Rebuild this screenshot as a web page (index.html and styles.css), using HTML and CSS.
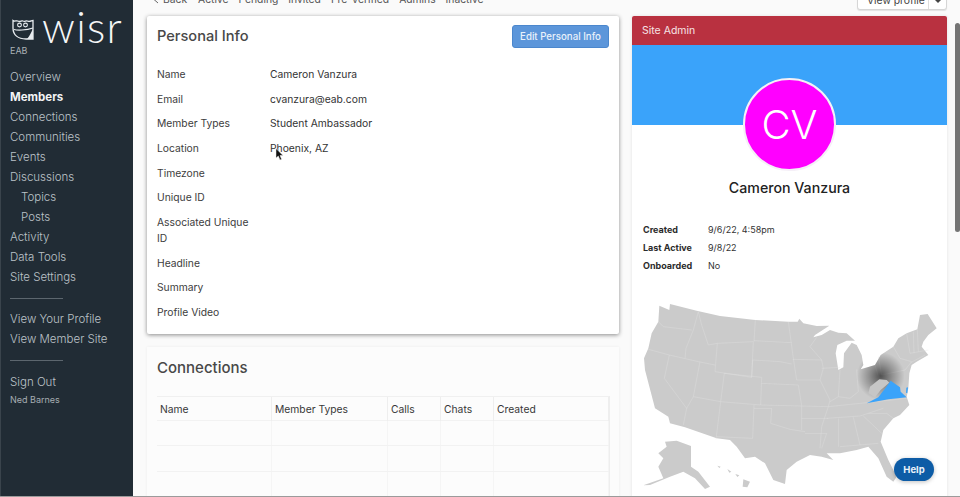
FILE: index.html
```html
<!DOCTYPE html>
<html lang="en">
<head>
<meta charset="utf-8">
<title>Member - Cameron Vanzura</title>
<link rel="stylesheet" href="styles.css">
</head>
<body>
<div class="app">
  <aside class="sidebar">
    <div class="brand">
      <svg class="owl" viewBox="0 0 22 21" width="22" height="21" aria-hidden="true">
        <path d="M1 1.5 C3 3 4.5 1 6.5 2.2 C8.5 3.4 9.5 1 11 2 C13 3.2 14 1 16 2.2 C18 3.2 19.5 1.5 21 1.5 L21 20 L14 20 C6 20 1 16 1 9 Z" fill="none" stroke="#e8ecef" stroke-width="1.3"/>
        <circle cx="7.5" cy="6" r="1.9" fill="none" stroke="#e8ecef" stroke-width="1.1"/>
        <circle cx="13.5" cy="6" r="1.9" fill="none" stroke="#e8ecef" stroke-width="1.1"/>
        <path d="M2 10.5 C5 11.5 14 11.5 21 9" fill="none" stroke="#e8ecef" stroke-width="1.1"/>
        <path d="M21 10 L21 20 L15 20 C18 17 19 13 21 10 Z" fill="#e8ecef"/>
      </svg>
      <span class="wordmark">wisr</span>
    </div>
    <div class="org">EAB</div>
    <nav class="nav">
      <a>Overview</a>
      <a class="active">Members</a>
      <a>Connections</a>
      <a>Communities</a>
      <a>Events</a>
      <a>Discussions</a>
      <a class="sub">Topics</a>
      <a class="sub">Posts</a>
      <a>Activity</a>
      <a>Data Tools</a>
      <a>Site Settings</a>
      <hr class="rule rule-one">
      <a>View Your Profile</a>
      <a>View Member Site</a>
      <hr class="rule rule-two">
      <a>Sign Out</a>
      <span class="user">Ned Barnes</span>
    </nav>
  </aside>

  <main class="main">
    <div class="topbar">
      <div class="tabs">
        <span class="tab back"><svg class="chev" viewBox="0 0 6 9" width="6" height="9" aria-hidden="true"><path d="M5 1 L1 4.5 L5 8" fill="none" stroke="#666" stroke-width="1"/></svg>Back</span>
        <span class="tab">Active</span>
        <span class="tab">Pending</span>
        <span class="tab">Invited</span>
        <span class="tab">Pre-Verified</span>
        <span class="tab">Admins</span>
        <span class="tab">Inactive</span>
      </div>
      <div class="split">
        <span class="split-main">View profile</span>
        <span class="split-caret"></span>
      </div>
    </div>

    <div class="columns">
      <div class="left">
        <section class="card info">
          <div class="card-head">
            <h2>Personal Info</h2>
            <button class="edit">Edit Personal Info</button>
          </div>
          <dl class="fields">
            <dt>Name</dt><dd>Cameron Vanzura</dd>
            <dt>Email</dt><dd>cvanzura@eab.com</dd>
            <dt>Member Types</dt><dd>Student Ambassador</dd>
            <dt>Location</dt><dd>Phoenix, AZ</dd>
            <dt>Timezone</dt><dd></dd>
            <dt>Unique ID</dt><dd></dd>
            <dt>Associated Unique ID</dt><dd></dd>
            <dt>Headline</dt><dd></dd>
            <dt>Summary</dt><dd></dd>
            <dt>Profile Video</dt><dd></dd>
          </dl>
        </section>

        <section class="connections">
          <h2>Connections</h2>
          <div class="table">
            <div class="row head"><span>Name</span><span>Member Types</span><span>Calls</span><span>Chats</span><span>Created</span></div>
            <div class="row"><span></span><span></span><span></span><span></span><span></span></div>
            <div class="row"><span></span><span></span><span></span><span></span><span></span></div>
            <div class="row"><span></span><span></span><span></span><span></span><span></span></div>
          </div>
        </section>
      </div>

      <section class="profile">
        <div class="role">Site Admin</div>
        <div class="banner"><div class="avatar">CV</div></div>
        <h3 class="person">Cameron Vanzura</h3>
        <dl class="stats">
          <dt>Created</dt><dd>9/6/22, 4:58pm</dd>
          <dt>Last Active</dt><dd>9/8/22</dd>
          <dt>Onboarded</dt><dd>No</dd>
        </dl>
        <svg class="map" viewBox="6 0 945 621" width="315" height="207" aria-hidden="true">
          <defs>
            <radialGradient id="glow">
              <stop offset="0" stop-color="#000" stop-opacity=".6"/>
              <stop offset=".5" stop-color="#000" stop-opacity=".28"/>
              <stop offset="1" stop-color="#000" stop-opacity="0"/>
            </radialGradient>
            <clipPath id="us"><path d="M88 47L118 60L120 42L200 62L270 78L376 90L475 95L503 95L508 86L520 100L560 108L598 107L555 135L550 142L575 135L600 120L625 128L650 130L675 152L650 152L622 165L617 190L625 240L640 232L642 190L665 158L680 165L695 195L700 225L692 238L735 225L752 195L790 170L805 145L830 130L862 118L870 75L893 72L920 115L895 135L880 155L875 170L895 195L860 215L845 225L838 250L835 295L830 320L838 345L810 375L790 385L760 420L752 455L775 510L800 560L790 575L770 560L745 505L715 470L680 480L630 490L590 490L610 510L575 500L540 495L500 515L470 540L465 582L430 570L405 520L375 500L345 505L320 470L300 450L260 445L165 412L120 400L115 380L75 355L45 240L42 205L55 175L65 130L85 95Z"/></clipPath>
          </defs>
          <path class="land" d="M88 47L118 60L120 42L200 62L270 78L376 90L475 95L503 95L508 86L520 100L560 108L598 107L555 135L550 142L575 135L600 120L625 128L650 130L675 152L650 152L622 165L617 190L625 240L640 232L642 190L665 158L680 165L695 195L700 225L692 238L735 225L752 195L790 170L805 145L830 130L862 118L870 75L893 72L920 115L895 135L880 155L875 170L895 195L860 215L845 225L838 250L835 295L830 320L838 345L810 375L790 385L760 420L752 455L775 510L800 560L790 575L770 560L745 505L715 470L680 480L630 490L590 490L610 510L575 500L540 495L500 515L470 540L465 582L430 570L405 520L375 500L345 505L320 470L300 450L260 445L165 412L120 400L115 380L75 355L45 240L42 205L55 175L65 130L85 95Z"/>
          <g class="borders">
            <path d="M85 95L100 110L185 120"/>
            <path d="M205 65L190 120L168 175L165 205"/>
            <path d="M55 178L118 195L205 215L255 225"/>
            <path d="M118 195L103 265L170 355L160 405"/>
            <path d="M210 215L190 320L170 355"/>
            <path d="M205 65L215 105L235 165L262 160"/>
            <path d="M262 160L255 245L365 262L370 155L262 160"/>
            <path d="M376 90L372 155M368 210L365 262"/>
            <path d="M372 152L485 158"/>
            <path d="M368 210L450 215L485 222"/>
            <path d="M475 95L490 205L500 270"/>
            <path d="M488 208L575 210"/>
            <path d="M283 250L272 335L190 320"/>
            <path d="M283 250L395 262L392 345L272 335L258 448"/>
            <path d="M372 345L368 445L260 440"/>
            <path d="M395 280L505 285"/>
            <path d="M392 345L595 350"/>
            <path d="M372 355L425 355L422 400L480 418L525 425"/>
            <path d="M505 285L515 347L515 420"/>
            <path d="M515 385L595 385"/>
            <path d="M500 270L570 270L600 330L595 350L575 410L570 475"/>
            <path d="M570 270L580 235L575 210L540 170L560 142"/>
            <path d="M575 235L630 232"/>
            <path d="M630 240L625 320L600 335"/>
            <path d="M680 238L685 305L660 325L625 320"/>
            <path d="M595 350L710 338L830 325"/>
            <path d="M590 385L690 378L760 355"/>
            <path d="M625 385L625 470M670 382L690 465"/>
            <path d="M630 470L745 460"/>
            <path d="M525 430L590 430L575 475"/>
            <path d="M700 378L755 430"/>
            <path d="M715 370L770 370L790 385"/>
            <path d="M745 200L755 255L825 240"/>
            <path d="M830 130L840 190L895 180M862 118L865 185M850 125L852 190M842 218L885 195"/>
            <path d="M790 170L810 205L845 215L825 240"/>
            <path d="M735 225L745 260"/>
          </g>
          <circle cx="752" cy="258" r="72" fill="url(#glow)" clip-path="url(#us)"/>
          <path class="wv" d="M715 310L720 290L748 268L770 270L778 278L752 300L735 322Z"/>
          <path class="va" d="M710 340L745 322L768 292L782 272L810 292L812 305L830 322L775 328Z"/>
          <path class="va" d="M829 293L834 292L832 310L828 308Z"/>
          <polygon class="land" points="105,455 140,452 183,468 183,530 205,545 240,590 225,597 195,565 160,545 120,560 60,585 40,586 100,565 85,530 100,505 85,490 110,470"/>
          <path class="land" d="M262 527L272 530L268 534ZM292 537L304 545L298 548ZM316 552L328 556L322 561ZM340 568L360 575L352 592L338 590Z"/>
        </svg>
      </section>
    </div>
  </main>
  <div class="scroll-thumb"></div>
  <svg class="cursor" viewBox="0 0 9 13" width="9" height="13" aria-hidden="true"><path d="M1 0.5L1 10L3.3 8L5 12L6.6 11.3L5 7.5L8 7.5Z" fill="#111" stroke="#eee" stroke-width=".5"/></svg>
  <button class="help">Help</button>
</div>
<div class="baseline"></div>
</body>
</html>
```

FILE: styles.css
```css
* { box-sizing: border-box; }
html, body { margin: 0; height: 497px; overflow: hidden; }
body { font-family: Inter, "Liberation Sans", sans-serif; background: #fafafa; color: #333; }

.app { position: relative; display: flex; height: 496px; overflow: hidden; }
.baseline { height: 1px; background: #9b9b9b; }

/* Sidebar */
.sidebar { flex: 0 0 133px; background: #212c35; border-left: 1px solid #3a444c; color: #c2c8cc; padding: 0 0 0 9px; }
.brand { display: flex; align-items: center; height: 42px; margin-top: 7px; }
.owl { margin: 2px 0 0 2px; flex: none; }
.wordmark { font-family: Lato, sans-serif; font-weight: 300; font-size: 43px; line-height: 42px; color: #f4f6f7; margin: -3px 0 0 8px; letter-spacing: 1.3px; }
.org { font-size: 9px; line-height: 12px; color: #aab1b6; margin-top: -4px; height: 20px; }
.nav { display: flex; flex-direction: column; align-items: flex-start; margin-top: 2px; }
.nav a { font-size: 11.5px; line-height: 20px; color: #bcc3c8; font-weight: 300; }
.nav a.active { color: #f3f4f5; font-weight: 700; }
.nav a.sub { padding-left: 11px; }
.rule { width: 53px; height: 1px; border: 0; background: #5c666e; margin: 0; }
.rule-one { margin: 11px 0 10px; }
.rule-two { margin: 11px 0 11px; }
.user { font-size: 9px; line-height: 14px; color: #a6adb2; margin-top: 1px; }

/* Main */
.main { flex: 1; padding-left: 14px; min-width: 0; }
.topbar { height: 16px; display: flex; justify-content: space-between; align-items: flex-end; width: 800px; }
.tabs { display: flex; gap: 10px; font-size: 10.3px; line-height: 13px; color: #555; margin: 0 0 10px 6px; }
.back { display: flex; align-items: center; gap: 4px; margin-right: 1px; }
.chev { flex: none; }
.split { display: flex; height: 22px; margin-bottom: 6px; background: #fff; border: 1px solid #d6d6d6; border-radius: 3px; font-size: 10.3px; line-height: 13px; color: #444; box-shadow: 0 1px 1px rgba(0,0,0,.1); white-space: nowrap; }
.split-main { width: 71px; padding: 5px 0 0 9px; border-right: 1px solid #ddd; }
.split-caret { width: 17px; position: relative; }
.split-caret::after { content: ""; position: absolute; left: 6px; top: 11px; border: 3px solid transparent; border-top-color: #444; }

.columns { display: flex; gap: 13px; align-items: flex-start; }
.left { width: 472px; }
.card { background: #fff; border-radius: 2px; box-shadow: 0 1px 4px rgba(0,0,0,.45); }
.info { height: 318px; padding: 9px 10px 0; }
.card-head { display: flex; justify-content: space-between; align-items: center; height: 23px; }
.card-head h2 { margin-top: -2px; }
h2 { margin: 0; font-size: 14.6px; font-weight: 500; color: #484848; }
.edit { font: 500 9.7px Inter, sans-serif; color: #e9f1fb; background: #5c96da; border: 1px solid #4b87cd; border-radius: 3px; height: 23px; width: 97px; padding: 0; }
.fields { display: grid; grid-template-columns: 113px 1fr; margin: 13.8px 0 0; font-size: 10.3px; line-height: 16px; }
.fields dt { padding: 4.33px 12px 4.33px 0; color: #3d3d3d; }
.fields dd { margin: 0; padding: 4.33px 0; color: #333; }

.connections { margin-top: 13px; padding: 11px 10px 0; background: #fcfcfc; height: 160px; box-shadow: 0 0 3px rgba(0,0,0,.06); }
.connections h2 { font-size: 15px; line-height: 20px; }
.table { margin-top: 18px; width: 453px; font-size: 10.3px; border-right: 1px solid #eee; }
.row { display: grid; grid-template-columns: 115px 116px 53px 53px 1fr; height: 25.3px; border-bottom: 1px solid #f2f2f2; }
.row span { padding: 0 3px; line-height: 24px; border-right: 1px solid #f5f5f5; color: #383838; }
.row.head { border-top: 1px solid #f0f0f0; height: 25px; }
.row.head span { border-right-color: #eee; }

.profile { width: 315px; height: 490px; background: #fff; box-shadow: 0 0 3px rgba(0,0,0,.1); }
.role { height: 29px; background: #b93140; color: #f6e3e5; font-size: 10.5px; line-height: 29px; padding-left: 10px; border-radius: 2px 2px 0 0; }
.banner { position: relative; height: 80px; background: #3aa3fa; display: flex; justify-content: center; }
.avatar { width: 93px; height: 93px; margin-top: 33px; border-radius: 50%; background: #f0f; border: 2px solid #f5f0f7; color: #fff; font-size: 40px; font-weight: 300; line-height: 90px; text-align: center; }
.person { margin: 53px 0 0; font-size: 14.2px; line-height: 20px; font-weight: 500; text-align: center; color: #222; }
.stats { display: grid; grid-template-columns: 65px 1fr; margin: 22.5px 0 0; padding-left: 11px; font-size: 9px; line-height: 18px; }
.stats dt { font-weight: 700; color: #2b2b2b; }
.stats dd { margin: 0; color: #333; }
.map { display: block; margin-top: 15.5px; }
.land { fill: #cbcbcb; }
.borders path { fill: none; stroke: #e4e4e4; stroke-width: 1; }
.wv { fill: #c6c6c6; }
.va { fill: #3aa3fa; }

/* Overlays */
.scroll-thumb { position: absolute; left: 955px; top: 23px; width: 5px; height: 209px; background: #747474; border-radius: 3px; }
.cursor { position: absolute; left: 275px; top: 148px; }
.help { position: absolute; left: 894px; top: 458px; width: 40px; height: 23px; border: 0; border-radius: 12px; background: #0d5ca6; color: #eaf2f9; font: 700 9.5px Inter, sans-serif; box-shadow: 0 1px 4px rgba(0,0,0,.25); padding: 0; }
```
